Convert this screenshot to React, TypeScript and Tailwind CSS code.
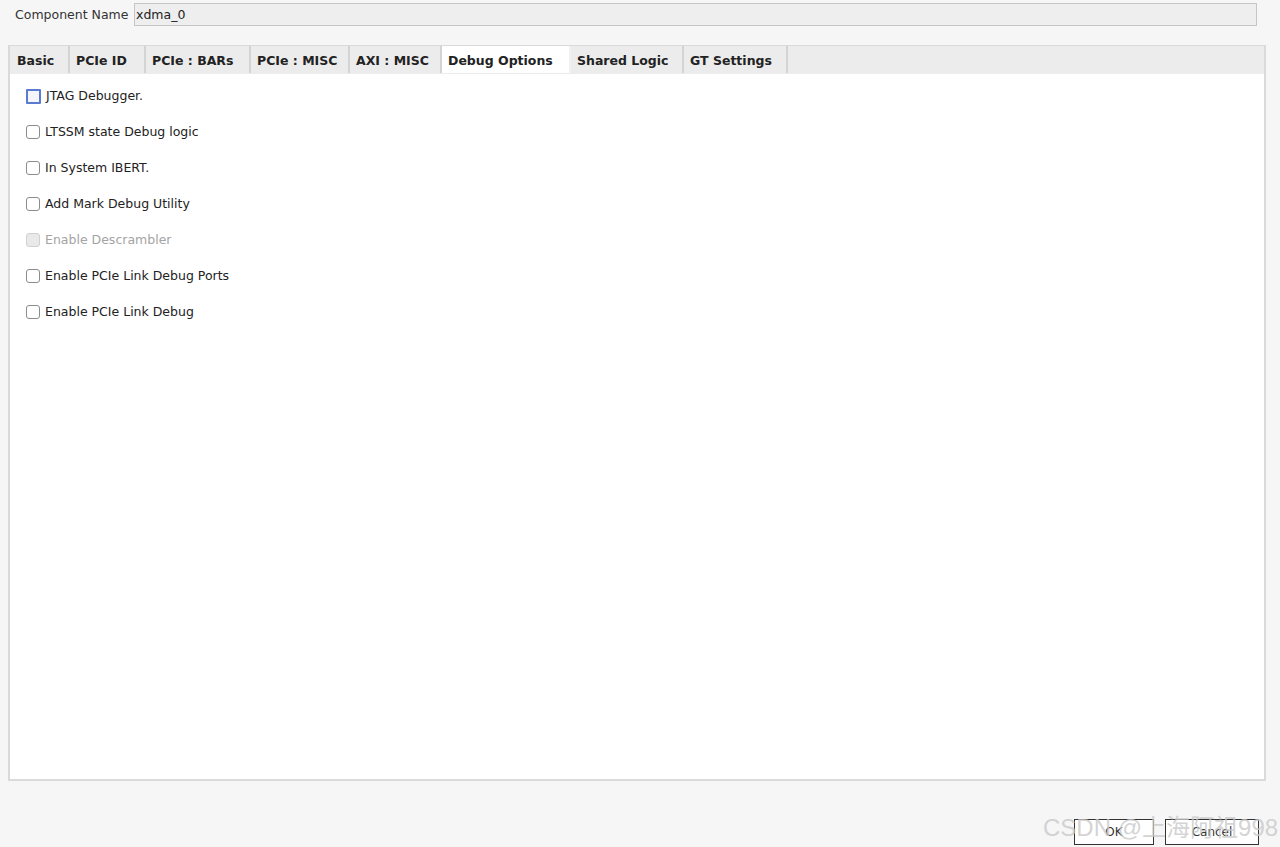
import React from 'react';

const tabs = [
  { label: 'Basic', w: 59 },
  { label: 'PCIe ID', w: 76 },
  { label: 'PCIe : BARs', w: 105 },
  { label: 'PCIe : MISC', w: 99 },
  { label: 'AXI : MISC', w: 92 },
  { label: 'Debug Options', w: 129, active: true },
  { label: 'Shared Logic', w: 113 },
  { label: 'GT Settings', w: 104 },
];

const options = [
  { label: 'JTAG Debugger.', focused: true },
  { label: 'LTSSM state Debug logic' },
  { label: 'In System IBERT.' },
  { label: 'Add Mark Debug Utility' },
  { label: 'Enable Descrambler', disabled: true },
  { label: 'Enable PCIe Link Debug Ports' },
  { label: 'Enable PCIe Link Debug' },
];

function Checkbox({ focused, disabled }: { focused?: boolean; disabled?: boolean }) {
  if (focused) {
    return <div className="w-[15px] h-[15px] border-2 border-[#5b7bd0] bg-[#f4f6fb] rounded-[1px]" />;
  }
  if (disabled) {
    return <div className="w-[14px] h-[14px] border border-[#d0d0d0] bg-[#e9e9e9] rounded-[3px]" />;
  }
  return <div className="w-[14px] h-[14px] border border-[#8c8c8c] bg-white rounded-[3px]" />;
}

export default function App() {
  return (
    <div
      className="relative w-[1280px] h-[847px] bg-[#f6f6f6] text-[12.5px] text-[#2a2a2a] overflow-hidden"
      style={{ fontFamily: '"DejaVu Sans", "Noto Sans", sans-serif' }}
    >
      {/* Component name */}
      <div className="flex items-center h-[23px] mt-[3px]">
        <span className="ml-[15px] w-[119px] text-[#333] pt-[1px]">Component Name</span>
        <div className="w-[1123px] h-[23px] bg-[#eeeeee] border border-[#c6c6c6] flex items-center px-[1px] pt-[1px] text-[#222]">
          xdma_0
        </div>
      </div>

      {/* Tabbed panel */}
      <div className="ml-[8px] mt-[19px] w-[1258px] h-[736px] border-2 border-t border-[#dadada] flex flex-col">
        <div className="h-[28px] bg-[#ececec] flex border-b border-[#ececec]">
          <div className="w-[1px]" />
          {tabs.map((t) => (
            <div
              key={t.label}
              style={{ width: t.w }}
              className={`h-full flex items-center pl-[6px] pt-[3px] font-bold text-[12.5px] text-[#222] border-r-2 ${
                t.active ? 'bg-white border-[#f0f0f0]' : 'border-[#d4d4d4]'
              }`}
            >
              {t.label}
            </div>
          ))}
        </div>
        <div className="flex-1 bg-white pl-[16px] pt-[4px] flex flex-col">
          {options.map((o) => (
            <div key={o.label} className="h-[36px] flex items-center gap-[5px]">
              <Checkbox focused={o.focused} disabled={o.disabled} />
              <span className={o.disabled ? 'text-[#a4a4a4]' : 'text-[#222]'}>{o.label}</span>
            </div>
          ))}
        </div>
      </div>

      {/* Buttons */}
      <div className="flex justify-end gap-[11px] mt-[38px] pr-[21px]">
        <div className="w-[80px] h-[26px] bg-white border border-[#333] flex items-center justify-center text-[12px] text-[#333]">
          OK
        </div>
        <div className="w-[94px] h-[26px] bg-white border border-[#333] flex items-center justify-center text-[12px] text-[#333]">
          Cancel
        </div>
      </div>

      {/* Watermark */}
      <div
        className="absolute left-[1043px] top-[810px] text-[24px] text-[#c8c8c8]/80 whitespace-nowrap pointer-events-none"
        style={{ fontFamily: '"Liberation Sans", "Noto Sans CJK SC", sans-serif' }}
      >
        CSDN @上海阿祖998
      </div>
    </div>
  );
}
